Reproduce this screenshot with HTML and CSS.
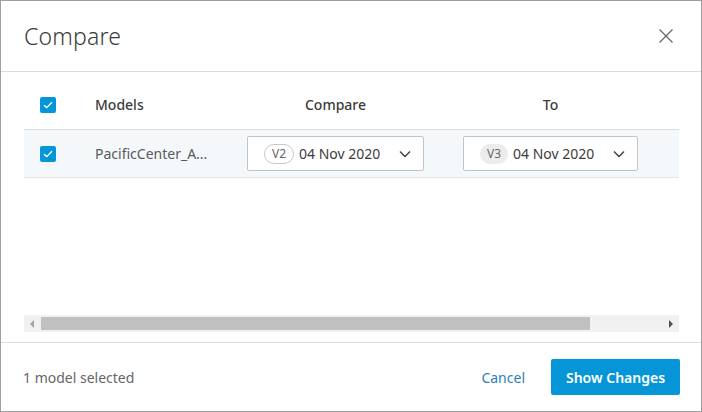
FILE: index.html
```html
<!DOCTYPE html>
<html>
<head>
<meta charset="utf-8">
<link rel="stylesheet" href="styles.css">
</head>
<body>
<div class="dialog">
  <header class="head">
    <h1 class="title">Compare</h1>
    <button class="close" aria-label="Close">
      <svg width="16" height="16" viewBox="0 0 16 16"><path d="M1.5 1.5L14.5 14.5M14.5 1.5L1.5 14.5" stroke="#666" stroke-width="1.3" fill="none"/></svg>
    </button>
  </header>
  <main class="content">
    <div class="table">
      <div class="row hrow">
        <div class="cell ccheck"><span class="check"><svg width="10" height="8" viewBox="0 0 10 8"><path d="M1 4.2L3.7 6.6L9 1.2" stroke="#fff" stroke-width="1.3" fill="none"/></svg></span></div>
        <div class="cell hlabel">Models</div>
        <div class="cell hlabel center">Compare</div>
        <div class="cell"></div>
        <div class="cell hlabel center">To</div>
      </div>
      <div class="row drow">
        <div class="cell ccheck"><span class="check"><svg width="10" height="8" viewBox="0 0 10 8"><path d="M1 4.2L3.7 6.6L9 1.2" stroke="#fff" stroke-width="1.3" fill="none"/></svg></span></div>
        <div class="cell name">PacificCenter_A...</div>
        <div class="cell">
          <div class="select">
            <span class="pill outline">V2</span>
            <span class="date">04 Nov 2020</span>
            <svg class="chev" width="12" height="8" viewBox="0 0 12 8"><path d="M1 1.5L6 6.5L11 1.5" stroke="#3c3c3c" stroke-width="1.4" fill="none"/></svg>
          </div>
        </div>
        <div class="cell"></div>
        <div class="cell">
          <div class="select">
            <span class="pill filled">V3</span>
            <span class="date">04 Nov 2020</span>
            <svg class="chev" width="12" height="8" viewBox="0 0 12 8"><path d="M1 1.5L6 6.5L11 1.5" stroke="#3c3c3c" stroke-width="1.4" fill="none"/></svg>
          </div>
        </div>
      </div>
    </div>
    <div class="scrollbar">
      <span class="arrow"><svg width="4" height="8" viewBox="0 0 4 8"><path d="M4 0L0 4L4 8Z" fill="#a3a3a3"/></svg></span>
      <span class="thumb"></span>
      <span class="track-rest"></span>
      <span class="arrow"><svg width="4" height="8" viewBox="0 0 4 8"><path d="M0 0L4 4L0 8Z" fill="#505050"/></svg></span>
    </div>
  </main>
  <footer class="foot">
    <span class="count">1 model selected</span>
    <div class="actions">
      <button class="btn-cancel">Cancel</button>
      <button class="btn-primary">Show Changes</button>
    </div>
  </footer>
</div>
</body>
</html>
```

FILE: styles.css
```css
* { box-sizing: border-box; }
html, body { margin: 0; padding: 0; background: #fff; }
body { font-family: "Noto Sans", "Open Sans", sans-serif; color: #3c3c3c; }

.dialog {
  width: 702px;
  height: 412px;
  border: 1px solid #a0a0a0;
  display: flex;
  flex-direction: column;
  background: #fff;
}

.head {
  height: 71px;
  border-bottom: 1px solid #dcdcdc;
  display: flex;
  align-items: center;
  justify-content: space-between;
  padding: 0 27px 0 23px;
  flex: none;
}
.title {
  margin: 0;
  font-size: 23px;
  font-weight: 300;
  color: #3c3c3c;
  letter-spacing: 0.2px;
  padding-bottom: 1px;
}
.close {
  border: 0;
  background: none;
  padding: 0;
  width: 16px;
  height: 16px;
  display: flex;
}

.content {
  flex: 1;
  display: flex;
  flex-direction: column;
  justify-content: space-between;
  padding: 8px 22px 10px 23px;
}

.row {
  display: grid;
  grid-template-columns: 71px 152px 177px 39px 175px;
  align-items: center;
}
.hrow {
  height: 50px;
  border-bottom: 1px solid #dcdcdc;
}
.drow {
  height: 48px;
  background: #f4f8fb;
  border-bottom: 1px solid #e6e6e6;
}
.cell { font-size: 14px; }
.ccheck { padding-left: 16px; display: flex; }
.check {
  width: 16px;
  height: 16px;
  border-radius: 2px;
  background: #0696d7;
  display: flex;
  align-items: center;
  justify-content: center;
}
.hlabel { font-weight: 500; color: #3c3c3c; }
.center { text-align: center; }
.name { color: #5a5a5a; }

.select {
  height: 35px;
  border: 1px solid #c4c4c4;
  border-radius: 2px;
  background: #fff;
  display: flex;
  align-items: center;
  padding: 0 12px 0 16px;
}
.pill {
  font-size: 12px;
  height: 20px;
  line-height: 20px;
  padding: 0 7px;
  border-radius: 10px;
  color: #666;
  margin-right: 5px;
}
.pill.outline { border: 1px solid #c8c8c8; line-height: 18px; }
.pill.filled { background: #ececec; }
.date { font-size: 14px; color: #3c3c3c; flex: 1; }
.chev { flex: none; }

.scrollbar {
  height: 17px;
  background: #f1f1f1;
  display: flex;
  align-items: center;
}
.arrow {
  width: 16px;
  height: 17px;
  display: flex;
  align-items: center;
  justify-content: center;
  flex: none;
}
.thumb {
  width: 549px;
  height: 13px;
  background: #c1c1c1;
  margin-left: 1px;
  flex: none;
}
.track-rest { flex: 1; }

.foot {
  height: 69px;
  border-top: 1px solid #dcdcdc;
  display: flex;
  align-items: center;
  justify-content: space-between;
  padding: 0 21px 0 22px;
  flex: none;
}
.count { font-size: 14px; color: #666; }
.actions { display: flex; align-items: center; gap: 14px; }
.btn-cancel {
  border: 0;
  background: none;
  font-family: inherit;
  font-size: 14px;
  color: #2c7fb5;
  padding: 0 12px;
  height: 36px;
}
.btn-primary {
  border: 0;
  background: #0696d7;
  color: #fff;
  font-family: inherit;
  font-size: 14px;
  font-weight: 600;
  height: 36px;
  width: 129px;
  border-radius: 2px;
}
```
